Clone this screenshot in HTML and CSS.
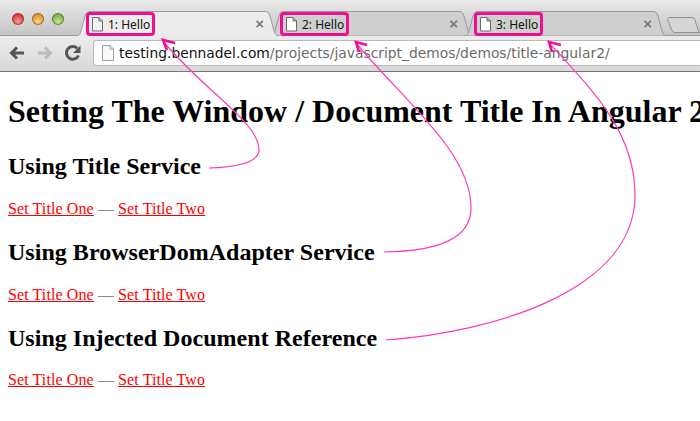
FILE: index.html
```html
<!DOCTYPE html>
<html lang="en">
<head>
<meta charset="utf-8">
<title>1: Hello</title>
<link rel="stylesheet" href="styles.css">
</head>
<body>
<header class="browser">
  <div class="tabstrip">
    <div class="lights">
      <span class="light light-red"></span>
      <span class="light light-amber"></span>
      <span class="light light-green"></span>
    </div>
    <div class="tabs">
      <div class="tab tab-active">
        <svg class="tab-shape" viewBox="0 0 203 25" preserveAspectRatio="none"><path d="M0 25 C3 25 4 23 5 20 L9 5 C10 2 11 .5 14 .5 L189 .5 C192 .5 193 2 194 5 L198 20 C199 23 200 25 203 25"/></svg>
        <div class="tab-label">
          <svg class="page-icon" viewBox="0 0 11 15"><path d="M.5.5h6.500l3.500 3.500v10h-10z M7 .5v3.500h3.500"/></svg>
          <span>1: Hello</span>
        </div>
        <span class="tab-close">×</span>
      </div>
      <div class="tab">
        <svg class="tab-shape" viewBox="0 0 203 25" preserveAspectRatio="none"><path d="M0 25 C3 25 4 23 5 20 L9 5 C10 2 11 .5 14 .5 L189 .5 C192 .5 193 2 194 5 L198 20 C199 23 200 25 203 25 Z"/></svg>
        <div class="tab-label">
          <svg class="page-icon" viewBox="0 0 11 15"><path d="M.5.5h6.500l3.500 3.500v10h-10z M7 .5v3.500h3.500"/></svg>
          <span>2: Hello</span>
        </div>
        <span class="tab-close">×</span>
      </div>
      <div class="tab">
        <svg class="tab-shape" viewBox="0 0 203 25" preserveAspectRatio="none"><path d="M0 25 C3 25 4 23 5 20 L9 5 C10 2 11 .5 14 .5 L189 .5 C192 .5 193 2 194 5 L198 20 C199 23 200 25 203 25 Z"/></svg>
        <div class="tab-label">
          <svg class="page-icon" viewBox="0 0 11 15"><path d="M.5.5h6.500l3.500 3.500v10h-10z M7 .5v3.500h3.500"/></svg>
          <span>3: Hello</span>
        </div>
        <span class="tab-close">×</span>
      </div>
      <svg class="new-tab" viewBox="0 0 33 16"><path d="M.5 2.500C.5 1.200 1.500.5 3 .5H25C26.500.5 27.500 1.500 28 3L31 13C31.500 15 32 15.500 33 15.500H8C6.500 15.500 5.500 15 5 13.500Z"/></svg>
    </div>
  </div>
  <div class="toolbar">
    <svg class="nav-icon" viewBox="0 0 18 16"><path class="nav-back" d="M16 8H4 M9 2.500 3.500 8 9 13.500"/></svg>
    <svg class="nav-icon" viewBox="0 0 18 16"><path class="nav-forward" d="M2 8h12 M9 2.500 14.500 8 9 13.500"/></svg>
    <svg class="nav-icon" viewBox="0 0 18 18"><path class="nav-reload" d="M14.500 11.500A6.300 6.300 0 1 1 13.300 4.500"/><path class="nav-reload-head" d="M16.500 1.500v7.500h-7.500z"/></svg>
    <div class="address">
      <svg class="address-icon" viewBox="0 0 12 16"><path d="M.5.500h7.500l3.500 3.500v11.500h-11z M8 .5v3.500h3.500"/></svg>
      <span class="url"><span class="url-host">testing.bennadel.com</span>/projects/javascript_demos/demos/title-angular2/</span>
    </div>
  </div>
</header>
<main class="page">
  <h1>Setting The Window / Document Title In Angular 2</h1>
  <h2>Using Title Service</h2>
  <p><a href="#one">Set Title One</a> <span class="dash">—</span> <a href="#two">Set Title Two</a></p>
  <h2>Using BrowserDomAdapter Service</h2>
  <p><a href="#one">Set Title One</a> <span class="dash">—</span> <a href="#two">Set Title Two</a></p>
  <h2>Using Injected Document Reference</h2>
  <p><a href="#one">Set Title One</a> <span class="dash">—</span> <a href="#two">Set Title Two</a></p>
</main>
<svg class="callouts" viewBox="0 0 700 421">
  <path class="curve" d="M209 168 C238 167 259 162 259 150 C259 122 205 92 163 41"/>
  <path class="arrow" d="M175 43 L163 40 L167 50"/>
  <path class="curve" d="M384 252 C440 251 471 238 471 208 C471 152 405 102 356 43"/>
  <path class="arrow" d="M367 45 L356 42 L359 52"/>
  <path class="curve" d="M386 340 C495 332 635 290 635 195 C635 130 590 88 549 43"/>
  <path class="arrow" d="M561 45 L549 42 L552 52"/>
</svg>
</body>
</html>
```
FILE: styles.css
```css
html, body {
  margin: 0;
  height: 421px;
  overflow: hidden;
  background: #fff;
}
body {
  position: relative;
  font-family: "Liberation Serif", "Times New Roman", serif;
  color: #000;
}
.browser {
  display: flex;
  flex-direction: column;
}
.tabstrip {
  position: relative;
  z-index: 2;
  display: flex;
  height: 36px;
  background: linear-gradient(#e9e9e9, #c4c4c4);
  box-shadow: inset 0 -1px #9a9a9a;
}
.lights {
  flex: none;
  display: flex;
  gap: 8px;
  width: 76px;
  box-sizing: border-box;
  padding: 13px 0 0 12px;
}
.light {
  width: 12px;
  height: 12px;
  border-radius: 50%;
  box-shadow: inset 0 0 0 1px rgba(90, 60, 40, .45);
}
.light-red { background: radial-gradient(circle at 50% 70%, #f79a94, #d8393a 65%); }
.light-amber { background: radial-gradient(circle at 50% 70%, #fbd58c, #dc9228 65%); }
.light-green { background: radial-gradient(circle at 50% 70%, #c6ea98, #76b049 65%); }
.tabs {
  display: flex;
  flex: none;
  padding-top: 11px;
}
.tab {
  position: relative;
  flex: none;
  display: flex;
  align-items: flex-start;
  justify-content: space-between;
  width: 203px;
  height: 25px;
  margin-right: -9px;
  box-sizing: border-box;
  padding: 0 15px 0 10px;
}
.tab-shape {
  position: absolute;
  inset: 0;
  width: 100%;
  height: 100%;
}
.tab-shape path {
  fill: #cfcfcf;
  stroke: #9c9c9c;
  stroke-width: 1;
}
.tab-active {
  z-index: 1;
}
.tab-active .tab-shape path {
  fill: #ececec;
}
.tab-label {
  position: relative;
  display: flex;
  align-items: center;
  gap: 5px;
  width: 69px;
  height: 24px;
  margin-top: 1px;
  box-sizing: border-box;
  padding-left: 3px;
  border: 3px solid #ee0f90;
  border-radius: 4px;
  font: 12px "Noto Sans", sans-serif;
  color: #111;
  white-space: nowrap;
}
.page-icon {
  flex: none;
  width: 11px;
  height: 15px;
}
.page-icon path {
  fill: #fff;
  stroke: #6d6d6d;
  stroke-width: 1;
}
.address-icon path {
  fill: #f8f8f8;
  stroke: #a0a0a0;
  stroke-width: 1;
}
.tab-active .page-icon path { fill: #f4f4f4; }
.tab-close {
  position: relative;
  margin-top: 4px;
  font: bold 15px/18px "Liberation Sans", sans-serif;
  color: #777;
}
.new-tab {
  flex: none;
  width: 33px;
  height: 16px;
  margin: 6px 0 0 9px;
}
.new-tab path {
  fill: #d6d6d6;
  stroke: #8f8f8f;
  stroke-width: 1;
}
.toolbar {
  display: flex;
  align-items: center;
  height: 36px;
  box-sizing: border-box;
  padding: 0 0 2px 8px;
  gap: 10px;
  background: linear-gradient(#ececec, #d8d8d8);
  border-bottom: 1px solid #777;
}
.nav-icon {
  flex: none;
  width: 18px;
  height: 18px;
}
.nav-back, .nav-forward, .nav-reload {
  fill: none;
  stroke-width: 3;
}
.nav-back { stroke: #555; }
.nav-forward { stroke: #bcbcbc; }
.nav-reload { stroke: #555; }
.nav-reload-head { fill: #555; }
.address {
  flex: 1;
  display: flex;
  align-items: center;
  gap: 5px;
  height: 26px;
  margin-left: 1px;
  box-sizing: border-box;
  padding-left: 8px;
  background: #fff;
  border: 1px solid #b9b9b9;
  border-right: 0;
  border-radius: 3px 0 0 3px;
}
.address-icon {
  flex: none;
  width: 12px;
  height: 16px;
}
.url {
  font: 13.85px "DejaVu Sans", sans-serif;
  color: #6b6b6b;
  white-space: nowrap;
}
.url-host { color: #111; }
.page {
  padding: 0 8px;
}
h1 {
  line-height: 37px;
  white-space: nowrap;
}
h2 {
  line-height: 28px;
  letter-spacing: .03px;
}
p {
  letter-spacing: .1px;
}
a {
  color: #f00;
}
.dash {
  color: #8a8a8a;
}
.callouts {
  position: absolute;
  top: 0;
  left: 0;
  z-index: 3;
  width: 700px;
  height: 421px;
  pointer-events: none;
}
.curve {
  fill: none;
  stroke: #ff3bb0;
  stroke-width: 1.2;
}
.arrow {
  fill: none;
  stroke: #ee0f95;
  stroke-width: 2.6;
}
```
